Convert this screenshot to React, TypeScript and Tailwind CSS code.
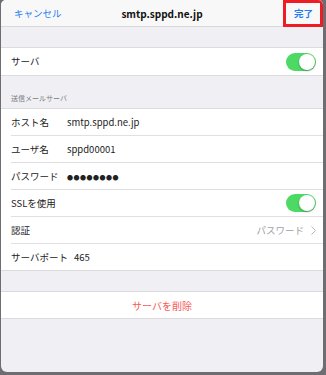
import React from 'react';

const font = { fontFamily: '"Noto Sans CJK JP", "Liberation Sans", sans-serif' };

const Toggle: React.FC = () => (
    <div className="relative w-[30px] h-[18px] rounded-full bg-[#4cd964]">
        <div className="absolute right-[1px] top-[1px] w-[16px] h-[16px] rounded-full bg-white shadow-[0_1px_2px_rgba(0,0,0,0.3)]" />
    </div>
);

const Row: React.FC<{ label: string; value?: React.ReactNode; right?: React.ReactNode; last?: boolean }> = ({
    label,
    value,
    right,
    last,
}) => (
    <div className="flex h-[27px] items-stretch pl-[10px] bg-white">
        <div className={`flex flex-1 items-center pr-[7px] ${last ? '' : 'border-b border-[#e0e0e4]'}`}>
            <span className="w-[56px] text-[9.5px] text-[#222]">{label}</span>
            <span className="flex-1 text-[9.5px] text-[#222]">{value}</span>
            {right}
        </div>
    </div>
);

const App: React.FC = () => {
    return (
        <div className="w-[326px] h-[375px] bg-[#6e6e72] overflow-hidden" style={font}>
            <div className="w-[322px] h-[372px] ml-[1px] rounded-b-[6px] rounded-t-[5px] bg-[#efeff4] flex flex-col overflow-hidden">
                {/* nav */}
                <div className="relative flex h-[27px] items-center justify-between bg-[#f8f8f8] border-b border-[#d8d8dc] pl-[13px] pr-[10px]">
                    <span className="text-[9.5px] text-[#1f7cf4]">キャンセル</span>
                    <span className="absolute left-0 right-0 text-center text-[10px] font-bold text-[#111] pointer-events-none">
                        smtp.sppd.ne.jp
                    </span>
                    <span className="text-[9.5px] font-bold text-[#1f7cf4]">完了</span>
                    <div className="absolute right-0 top-0 w-[40px] h-[27px] border-[3px] border-[#ee1c25]" />
                </div>

                <div className="h-[20px]" />

                <div className="border-y border-[#dcdce0]">
                    <Row label="サーバ" right={<Toggle />} last />
                </div>

                <div className="h-[32px] flex items-end pl-[10px] pb-[5px]">
                    <span className="text-[7px] text-[#7a7a7f]">送信メールサーバ</span>
                </div>

                <div className="border-y border-[#dcdce0]">
                    <Row label="ホスト名" value="smtp.sppd.ne.jp" />
                    <Row label="ユーザ名" value="sppd00001" />
                    <Row label="パスワード" value={<span className="text-[6px] tracking-[0.5px]">●●●●●●●●</span>} />
                    <Row label="SSLを使用" right={<Toggle />} />
                    <Row
                        label="認証"
                        right={
                            <span className="flex items-center gap-[7px] text-[9.5px] text-[#a0a0a5]">
                                パスワード
                                <svg width="5" height="9" viewBox="0 0 5 9" fill="none">
                                    <path d="M0.5 0.5L4.5 4.5L0.5 8.5" stroke="#b8b8bd" strokeWidth="1" />
                                </svg>
                            </span>
                        }
                    />
                    <div className="flex h-[26px] items-center pl-[10px] bg-white">
                        <span className="text-[9.5px] text-[#222]">サーバポート</span>
                        <span className="ml-[6px] text-[9.5px] text-[#222]">465</span>
                    </div>
                </div>

                <div className="h-[20px]" />

                <div className="flex h-[28px] items-center justify-center bg-white border-y border-[#dcdce0]">
                    <span className="text-[10px] text-[#f65a55]">サーバを削除</span>
                </div>
            </div>
        </div>
    );
};

export default App;
